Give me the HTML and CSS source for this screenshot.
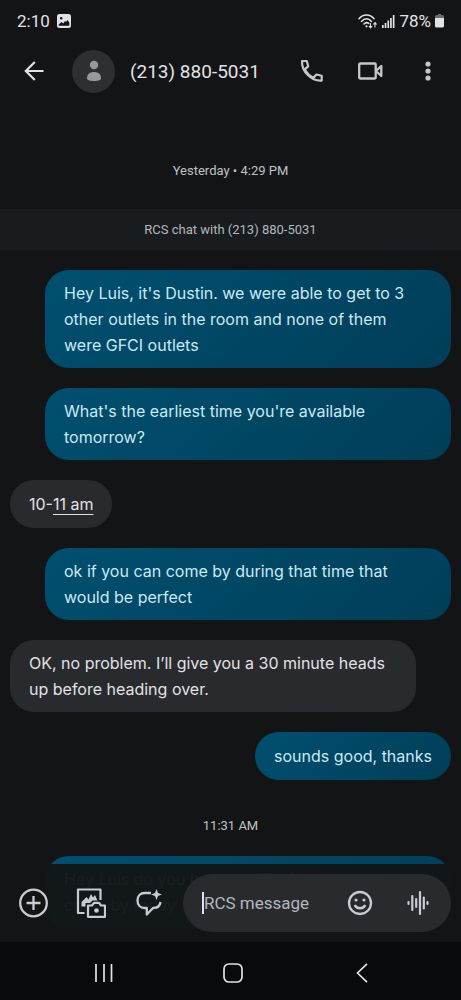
FILE: index.html
```html
<!DOCTYPE html>
<html lang="en">
<head>
<meta charset="utf-8">
<meta name="viewport" content="width=device-width, initial-scale=1">
<title>(213) 880-5031</title>
<link rel="stylesheet" href="styles.css">
</head>
<body>
<div class="phone">
  <div class="status">
    <div class="status-group">
      <span class="clock">2:10</span>
      <svg width="14" height="14" viewBox="0 0 14 14"><path fill="currentColor" fill-rule="evenodd" d="M2.500 0h9A2.500 2.500 0 0 1 14 2.500v9a2.500 2.500 0 0 1-2.500 2.500h-9A2.500 2.500 0 0 1 0 11.500v-9A2.500 2.500 0 0 1 2.500 0ZM1.700 10.500v1.300h10.600V8.500L10.500 6 9 8 8 7 6.300 9.500 4.500 8ZM4.200 3a1.300 1.300 0 1 0 0 2.600 1.300 1.300 0 0 0 0-2.600Z"/></svg>
    </div>
    <div class="status-group status-right">
      <svg width="20" height="15" viewBox="0 0 20 15" fill="none" stroke="currentColor" stroke-width="1.600" stroke-linecap="round"><path d="M1 4.700C5-.2 12-.2 16 4.700M3.500 7.400c3-3.500 7-3.500 10 0M6 10c1.500-1.700 3.300-1.700 4.700-.6"/><circle cx="8.500" cy="12.300" r="1.100" fill="currentColor" stroke="none"/><path stroke-width="1.100" d="M12.500 9.500v4M11.200 12.300l1.300 1.500 1.300-1.500M17 13V9M15.700 10.200 17 8.700l1.300 1.500"/></svg>
      <svg width="13" height="13" viewBox="0 0 13 13" fill="currentColor"><path d="M0 10h1.700v3H0zM2.700 8h1.700v5H2.700zM5.400 5.500h1.700V13H5.400zM8.100 3h1.700v10H8.100zM10.800 0h1.700v13h-1.700z"/></svg>
      <span class="percent">78%</span>
      <svg width="9" height="14" viewBox="0 0 9 14"><path fill="#686a6c" d="M3 0h3v1h1.500Q9 1 9 2.500V5H0V2.500Q0 1 1.500 1H3z"/><path fill="currentColor" d="M0 4h9v8q0 1.500-1.500 1.500h-6Q0 13.500 0 12z"/></svg>
    </div>
  </div>

  <header class="appbar">
    <button class="plain" aria-label="Back"><svg width="20" height="20" viewBox="0 0 20 20" fill="none" stroke="currentColor" stroke-width="2.200"><path d="M19.500 10H2M10.800 1 1.800 10l9 9"/></svg></button>
    <span class="avatar"><svg width="16" height="22" viewBox="0 0 16 22" fill="currentColor"><circle cx="8" cy="5" r="4.200"/><path d="M1 18.500C1 14 4 12 8 12s7 2 7 6.500c0 1.600-3 2.500-7 2.500s-7-.9-7-2.500Z"/></svg></span>
    <h1 class="contact">(213) 880-5031</h1>
    <div class="actions">
      <button class="plain" aria-label="Call"><svg width="24" height="24" viewBox="0 0 24 24" fill="none" stroke="currentColor" stroke-width="2.200" stroke-linejoin="round"><path d="M2 2h4.800l1.400 5.300-3.300 2.900a18 18 0 0 0 8.600 8.600l2.900-3.300 5.300 1.300v4.800C11.500 22.500 1.500 12.500 2 2Z"/></svg></button>
      <button class="plain" aria-label="Video call"><svg width="25" height="18" viewBox="0 0 25 18" fill="none" stroke="currentColor" stroke-width="2.300" stroke-linejoin="round"><rect x="1.200" y="1.500" width="16.500" height="15" rx="1"/><path d="m18 9 5.300-5v10z"/></svg></button>
      <button class="plain more" aria-label="More options"><svg width="6" height="20" viewBox="0 0 6 20" fill="currentColor"><circle cx="3" cy="3" r="2.600"/><circle cx="3" cy="10" r="2.600"/><circle cx="3" cy="17" r="2.600"/></svg></button>
    </div>
  </header>

  <main class="thread">
    <time class="stamp">Yesterday • 4:29 PM</time>
    <p class="notice">RCS chat with (213) 880-5031</p>
    <div class="messages">
      <p class="bubble sent">Hey Luis, it's Dustin. we were able to get to 3 other outlets in the room and none of them<br>were GFCI outlets</p>
      <p class="bubble sent">What's the earliest time you're available tomorrow?</p>
      <p class="bubble received short">10-<a href="#time">11 am</a></p>
      <p class="bubble sent">ok if you can come by during that time that would be perfect</p>
      <p class="bubble received">OK, no problem. I’ll give you a 30 minute heads up before heading over.</p>
      <p class="bubble sent short">sounds good, thanks</p>
      <time class="stamp stamp-late">11:31 AM</time>
      <p class="bubble sent">Hey Luis do you have an ETA for when you'll come by today</p>
    </div>
  </main>

  <form class="composer">
    <div class="tools">
      <button type="button" class="plain" aria-label="Add"><svg width="30" height="30" viewBox="0 0 30 30" fill="none" stroke="currentColor" stroke-width="2.300"><circle cx="15.500" cy="15" r="13.300"/><path d="M15.500 8v14M8.500 15h14"/></svg></button>
      <button type="button" class="plain" aria-label="Gallery and camera"><svg width="30" height="30" viewBox="0 0 30 30" fill="none" stroke="currentColor" stroke-width="2.200" stroke-linejoin="round"><path d="M8.500 25H2V1.500h22.500V12"/><path fill="currentColor" stroke="none" d="M5.500 18.500V14l5-5 2 2.500L15 6l2 3.500L19 7l2.500 5.500h-5L14 15H9.500v3.500z"/><path d="M12 17.500h4l2-2.700h5l2 2.700h4v11.300H12z"/><circle cx="20.500" cy="22.500" r="2.300" fill="currentColor" stroke="none"/></svg></button>
      <button type="button" class="plain" aria-label="Magic compose"><svg width="30" height="28" viewBox="-2 0 30 28" fill="none" stroke="currentColor" stroke-width="2.300" stroke-linejoin="round"><path d="M15 4H8.500C4.500 4 1.500 7 1.500 11.500S4.500 19 8.500 19h2.300v6.500l6.200-6.500c4.200 0 7-2 7.500-6"/><path fill="currentColor" stroke="none" d="M20.500 0 22 4l4 1.500L22 7l-1.500 4L19 7l-4-1.500L19 4z"/></svg></button>
    </div>
    <div class="field">
      <span class="caret"></span>
      <input type="text" aria-label="RCS message" placeholder="RCS message">
      <button type="button" class="plain" aria-label="Emoji"><svg width="26" height="26" viewBox="0 0 26 26" fill="none" stroke="currentColor" stroke-width="2.300"><circle cx="13" cy="13" r="11"/><path d="M7.800 15c1.600 4.300 8.800 4.300 10.400 0"/><g fill="currentColor" stroke="none"><circle cx="9" cy="10" r="1.600"/><circle cx="17" cy="10" r="1.600"/></g></svg></button>
      <button type="button" class="plain voice" aria-label="Voice message"><svg width="22" height="26" viewBox="0 0 22 26" fill="none" stroke="currentColor" stroke-width="2.200" stroke-linecap="round"><path d="M1.500 12v2M5.300 6v14M9.200 9v8M13 2v22M16.800 7.500v11M20.500 12v2"/></svg></button>
    </div>
  </form>

  <nav class="navbar" aria-label="System">
    <button class="plain" aria-label="Recents"><svg width="20" height="20" viewBox="0 0 20 20" stroke="currentColor" stroke-width="1.700"><path d="M2 1v18M10 1v18M17.500 1v18"/></svg></button>
    <button class="plain" aria-label="Home"><svg width="20" height="20" viewBox="0 0 20 20" fill="none" stroke="currentColor" stroke-width="1.700"><rect x="1" y="1" width="18" height="18" rx="5"/></svg></button>
    <button class="plain" aria-label="Back"><svg width="20" height="20" viewBox="0 0 20 20" fill="none" stroke="currentColor" stroke-width="1.700"><path d="M15 .8 5.500 10l9.500 9.200"/></svg></button>
  </nav>
</div>
</body>
</html>
```
FILE: styles.css
```css
* { box-sizing: border-box; }

body {
  margin: 0;
  background: #131416;
  color: #e1e2e5;
  font-family: Roboto, "Noto Sans", sans-serif;
}

.phone {
  display: flex;
  flex-direction: column;
  height: 100vh;
}

svg { display: block; flex: none; }

.plain {
  display: flex;
  padding: 0;
  border: 0;
  background: none;
  color: inherit;
}

.status {
  display: flex;
  justify-content: space-between;
  align-items: center;
  padding: 0 17px;
  height: 42px;
}

.status-group { display: flex; align-items: center; gap: 7px; }
.status-right { gap: 4px; }
.clock,
.percent { font-size: 17px; }

.appbar {
  display: flex;
  align-items: center;
  height: 58px;
  padding: 0 30px 0 24px;
}

.avatar {
  display: grid;
  place-items: center;
  width: 43px;
  height: 43px;
  margin: 0 15px 0 28px;
  border-radius: 50%;
  background: #2e2f30;
  color: #969a9a;
}

.contact {
  flex: 1;
  margin: 0;
  font-size: 19px;
  font-weight: 400;
  white-space: nowrap;
}

.actions { display: flex; align-items: center; gap: 34px; color: #c4c7cc; }
.more { margin-left: 8px; }

.thread {
  flex: 1;
  min-height: 0;
  overflow: hidden;
  padding-top: 61px;
}

.stamp {
  display: block;
  text-align: center;
  font-size: 13px;
  line-height: 20px;
  color: #c0c2c5;
}

.notice {
  margin: 28px 0 20px;
  padding: 10px;
  background: #181c1f;
  text-align: center;
  font-size: 13px;
  line-height: 21px;
  color: #b5b7ba;
}

.messages {
  display: flex;
  flex-direction: column;
  gap: 20px;
  padding: 0 10px;
}

.bubble {
  flex: none;
  max-width: 406px;
  margin: 0;
  padding: 10px 19px;
  border-radius: 24px;
  font-family: Inter, Roboto, sans-serif;
  font-size: 16px;
  line-height: 26px;
}

.short { padding: 11px 19px; }

.sent {
  align-self: flex-end;
  background: linear-gradient(135deg, #00506f, #003e59);
  color: #cce8f5;
}

.received {
  align-self: flex-start;
  background: #292a2d;
}

.received a { color: inherit; text-underline-offset: 4px; }
.stamp-late { margin-top: 16px; }

/* Translucent bar laid over the end of the thread. */
.composer {
  position: relative;
  display: flex;
  align-items: center;
  gap: 19px;
  height: 78px;
  margin-top: -78px;
  padding: 0 10px 0 18px;
  background: rgba(19, 21, 23, 0.96);
  color: #c8cbd1;
}

.tools { display: flex; align-items: center; gap: 28px; }

.field {
  flex: 1;
  min-width: 0;
  display: flex;
  align-items: center;
  height: 58px;
  padding: 0 22px 0 19px;
  border-radius: 29px;
  background: #292a2e;
}

.caret {
  width: 2px;
  height: 22px;
  background: #e1e2e5;
}

.voice { margin-left: 34px; }

.field input {
  flex: 1;
  min-width: 0;
  padding: 0;
  border: 0;
  outline: 0;
  background: none;
  color: #e1e2e5;
  font: 17px/26px Roboto, sans-serif;
}

.field input::placeholder { color: #b4b7bd; opacity: 1; }

.navbar {
  display: flex;
  justify-content: space-between;
  align-items: center;
  height: 58px;
  padding: 4px 89px 0 94px;
  background: #090a0b;
}
```
